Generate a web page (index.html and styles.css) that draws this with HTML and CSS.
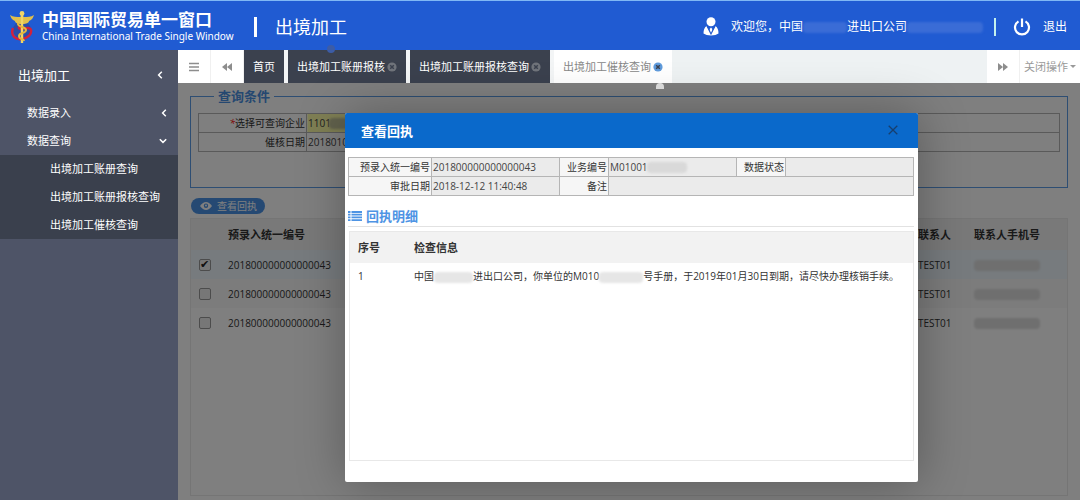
FILE: index.html
```html
<!DOCTYPE html>
<html lang="zh-CN">
<head>
<meta charset="utf-8">
<title>中国国际贸易单一窗口 - 出境加工</title>
<link rel="stylesheet" href="styles.css">
</head>
<body>
<svg class="defs" width="0" height="0" aria-hidden="true">
  <symbol id="i-left" viewBox="0 0 6 8"><path d="M4.8 .8 1.6 4l3.2 3.2" fill="none" stroke="currentColor" stroke-width="1.5"/></symbol>
  <symbol id="i-down" viewBox="0 0 8 6"><path d="M.8 1.2 4 4.4l3.2-3.2" fill="none" stroke="currentColor" stroke-width="1.5"/></symbol>
  <symbol id="i-bars" viewBox="0 0 10 10"><path d="M0 1.5h10M0 5h10M0 8.500h10" stroke="currentColor" stroke-width="1.4"/></symbol>
  <symbol id="i-back" viewBox="0 0 10 8"><path d="M5 0v8L0 4zM10 0v8L5 4z" fill="currentColor"/></symbol>
  <symbol id="i-fwd" viewBox="0 0 10 8"><path d="M0 0v8l5-4zM5 0v8l5-4z" fill="currentColor"/></symbol>
  <symbol id="i-times" viewBox="0 0 10 10"><circle cx="5" cy="5" r="4.600" fill="currentColor"/><path class="cross" d="m3.200 3.200 3.600 3.600M6.800 3.200 3.200 6.800" stroke-width="1.500"/></symbol>
</svg>

<header class="top">
  <div class="brand">
    <svg class="emblem" viewBox="0 0 24 34" aria-hidden="true">
      <circle cx="12" cy="20" r="9" fill="#2a4da8"/>
      <path d="M3 18c-3 8 3 12 9 11s10-5 9-9-7-1-10-1-3-3 1-3" fill="none" stroke="#d2213c" stroke-width="2.4"/>
      <path d="M0 5c3 2 7 2 10 2l2-1 2 1c3 0 7 0 10-2-1 3-2 5-5 6 0 2-3 3-6 3h-2c-3 0-6-1-6-3C2 10 1 8 0 5z" fill="#e3c04c"/>
      <circle cx="12" cy="3.5" r="2.4" fill="#f2d566"/>
      <path d="M12 5v28" stroke="#f2d566" stroke-width="2.4"/>
      <path d="M8 13c-1 5 8 3 8 7s-7 2-7 6 5 2 5 5" fill="none" stroke="#e7b83c" stroke-width="2"/>
    </svg>
    <div class="names">
      <div class="cn">中国国际贸易单一窗口</div>
      <div class="en">China International Trade Single Window</div>
    </div>
  </div>
  <span class="bar"></span>
  <h1>出境加工</h1>
  <div class="user">
    <svg width="16" height="19" viewBox="0 0 16 19" aria-hidden="true"><circle cx="8" cy="4.800" r="4.500" fill="#fff"/><path d="M3.500 9Q.5 11 .5 16.500 3 18.500 8 18.500t7.500-2Q15.500 11 12.500 9L8 16z" fill="#fff"/><path d="M8 10.500 9.300 12 8.800 16 8 17l-.8-1-.5-4z" fill="#fff"/><path d="M4 9l4 8 4-8" fill="none" stroke="#2058cf" stroke-width="1.200"/></svg>
    <span class="hello">欢迎您，中国<i class="smudge blue s44"></i>进出口公司<i class="smudge blue s76"></i></span>
    <span class="bar thin"></span>
    <button class="exit" type="button">
      <svg width="18" height="18" viewBox="0 0 18 18" aria-hidden="true"><path d="M5.500 3.400a7 7 0 1 0 7 0M9 .5v8.500" fill="none" stroke="#fff" stroke-width="2.200"/></svg>
      <span>退出</span>
    </button>
  </div>
</header>

<div class="shell">
  <nav class="side">
    <a class="lv1" href="#">出境加工<svg width="6" height="8"><use href="#i-left"/></svg></a>
    <a class="lv2" href="#">数据录入<svg width="6" height="8"><use href="#i-left"/></svg></a>
    <a class="lv2" href="#">数据查询<svg width="8" height="6"><use href="#i-down"/></svg></a>
    <div class="sub">
      <a href="#">出境加工账册查询</a>
      <a href="#">出境加工账册报核查询</a>
      <a href="#">出境加工催核查询</a>
    </div>
  </nav>

  <main class="main">
    <div class="tabs">
      <button class="tool" type="button" aria-label="菜单"><svg width="10" height="10"><use href="#i-bars"/></svg></button>
      <button class="tool" type="button" aria-label="向左"><svg width="10" height="8"><use href="#i-back"/></svg></button>
      <a class="tab" href="#">首页</a>
      <a class="tab dot" href="#">出境加工账册报核<svg width="10" height="10"><use href="#i-times"/></svg></a>
      <a class="tab" href="#">出境加工账册报核查询<svg width="10" height="10"><use href="#i-times"/></svg></a>
      <a class="tab active" href="#">出境加工催核查询<svg width="10" height="10"><use href="#i-times"/></svg></a>
      <span class="fill"></span>
      <button class="tool" type="button" aria-label="向右"><svg width="10" height="8"><use href="#i-fwd"/></svg></button>
      <button class="tool close-ops" type="button">关闭操作<span class="caret"></span></button>
    </div>

    <div class="content">
      <fieldset class="query">
        <legend>查询条件</legend>
        <table class="form">
          <tr><th><label for="ent"><em>*</em>选择可查询企业</label></th><td class="need"><input id="ent" value="1101"><i class="smudge dim over"></i></td></tr>
          <tr><th><label for="day">催核日期</label></th><td><input id="day" value="20180101"></td></tr>
        </table>
      </fieldset>
      <button class="view" type="button"><svg width="12" height="8" viewBox="0 0 12 8" aria-hidden="true"><path d="M0 4q6-8 12 0-6 8-12 0z" fill="#fff"/><circle cx="6" cy="3.800" r="2.200" fill="#4b93e6"/><circle cx="6" cy="3.500" r="1" fill="#fff"/></svg>查看回执</button>
      <div class="gridbox">
        <table class="grid">
          <colgroup><col class="c-check"><col><col class="c-man"><col class="c-tel"></colgroup>
          <thead><tr><th></th><th>预录入统一编号</th><th>联系人</th><th>联系人手机号</th></tr></thead>
          <tbody>
            <tr class="on"><td><input type="checkbox" aria-label="选择第1行" checked></td><td>201800000000000043</td><td>TEST01</td><td><i class="smudge dim s66"></i></td></tr>
            <tr class="odd"><td><input type="checkbox" aria-label="选择第2行"></td><td>201800000000000043</td><td>TEST01</td><td><i class="smudge dim s66"></i></td></tr>
            <tr><td><input type="checkbox" aria-label="选择第3行"></td><td>201800000000000043</td><td>TEST01</td><td><i class="smudge dim s66"></i></td></tr>
          </tbody>
        </table>
      </div>

      <div class="mask">
        <section class="dialog" role="dialog" aria-labelledby="dlg-title">
          <div class="dlg-head">
            <h2 id="dlg-title">查看回执</h2>
            <button type="button" aria-label="关闭"><svg width="10" height="10" viewBox="0 0 10 10"><path d="m.7.7 8.600 8.600M9.300.7.7 9.300" stroke="#173f6e" stroke-width="1.300"/></svg></button>
          </div>
          <div class="dlg-body">
            <table class="form info">
              <colgroup><col class="w1"><col class="w2"><col class="w3"><col class="w2"><col class="w3"><col></colgroup>
              <tr>
                <th><label for="f1">预录入统一编号</label></th><td><input id="f1" readonly value="201800000000000043"></td>
                <th><label for="f2">业务编号</label></th><td><input id="f2" readonly value="M01001"><i class="smudge over biz"></i></td>
                <th><label for="f3">数据状态</label></th><td><input id="f3" readonly></td>
              </tr>
              <tr>
                <th><label for="f4">审批日期</label></th><td><input id="f4" readonly value="2018-12-12 11:40:48"></td>
                <th><label for="f5">备注</label></th><td colspan="3"><input id="f5" readonly></td>
              </tr>
            </table>
            <h3><svg width="14" height="10" viewBox="0 0 14 10" aria-hidden="true"><path d="M0 1h2.500M3.500 1H14M0 3.700h2.500M3.500 3.700H14M0 6.400h2.500M3.500 6.400H14M0 9.100h2.500M3.500 9.100H14" stroke="#4e94e4" stroke-width="1.800"/></svg>回执明细</h3>
            <div class="detail">
              <table class="grid">
                <colgroup><col class="c-no"><col></colgroup>
                <thead><tr><th>序号</th><th>检查信息</th></tr></thead>
                <tbody><tr><td>1</td><td>中国<i class="smudge s39"></i>进出口公司，你单位的M010<i class="smudge s44"></i>号手册，于2019年01月30日到期，请尽快办理核销手续。</td></tr></tbody>
              </table>
            </div>
          </div>
        </section>
      </div>
    </div>
  </main>
</div>
</body>
</html>
```
FILE: styles.css
```css
* { box-sizing: border-box; }
html, body { height: 100%; }
body {
  margin: 0;
  display: flex;
  flex-direction: column;
  font: 10px/14px "Open Sans", "Noto Sans CJK SC", sans-serif;
  color: #333;
  background: #fff;
}
.defs { position: absolute; }
a { color: inherit; text-decoration: none; }
button { font: inherit; color: inherit; border: 0; padding: 0; background: none; cursor: pointer; }
table { border-collapse: collapse; table-layout: fixed; width: 100%; }
h1, h2, h3 { margin: 0; }
.cross { stroke: #3b414e; }

/* header */
.top {
  flex: none;
  height: 50px;
  display: flex;
  align-items: center;
  padding: 2px 13px 0 10px;
  background: #205bd2;
  border-top: 1px solid #80b8f5;
  color: #fff;
}
.brand { display: flex; align-items: center; gap: 8px; width: 244px; }
.emblem { width: 24px; height: 34px; }
.cn { font-size: 17px; line-height: 19px; font-weight: 700; }
.en { font-size: 10px; line-height: 14px; font-family: "Noto Sans", sans-serif; white-space: nowrap; }
.bar { width: 3px; height: 20px; background: #fff; }
.bar.thin { width: 2px; height: 18px; background: #c3f1ee; }
.top h1 { margin-left: 18px; font-size: 18px; line-height: 24px; font-weight: 400; }
.user { margin-left: auto; display: flex; align-items: center; font-size: 12px; }
.hello { margin: 0 11px 0 12px; white-space: nowrap; }
.exit { display: flex; align-items: center; gap: 12px; margin-left: 17px; }

/* blurred-out private values */
.smudge { display: inline-block; height: 11px; vertical-align: middle; background: #e6e6e6; border-radius: 4px; filter: blur(1px); }
.smudge.blue { background: #3a6cd6; }
.smudge.dim { background: #dedede; }
.s39 { width: 39px; }
.s44 { width: 44px; }
.s66 { width: 66px; }
.s76 { width: 76px; }
.smudge.over { position: absolute; left: 22px; top: 4px; width: 30px; }
.need .smudge { background: #c4c49a; }
.smudge.biz { left: 38px; width: 40px; background: #d9d9d9; }

.shell { flex: 1; display: flex; min-height: 0; }

/* sidebar */
.side { flex: none; width: 178px; background: #4e5467; color: #fff; font-size: 11px; }
.side a { display: flex; align-items: center; height: 28px; }
.side a svg { margin-left: auto; }
.side .lv1 { height: 49px; padding: 0 15px 0 18px; font-size: 13px; }
.side .lv2 { padding: 0 11px 0 27px; }
.sub { background: #3a404d; }
.sub a { padding-left: 50px; }

/* tab strip */
.main { flex: 1; min-width: 0; display: flex; flex-direction: column; }
.tabs { flex: none; height: 33px; display: flex; background: #eef2f3; font-size: 11px; }
.tool { width: 33px; display: flex; align-items: center; justify-content: center; background: #fff; color: #8d8d8d; border-right: 1px solid #f0f0f0; }
.tab { position: relative; display: flex; align-items: center; gap: 2px; padding: 0 9px; background: #3b414e; color: #fff; border-right: 4px solid #f3f5f6; white-space: nowrap; }
.tab svg { color: #70747b; }
.tab.active { background: #fff; color: #888; border-right: 0; }
.tab.active svg { color: #5f9bdc; }
.tab.active .cross { stroke: #fff; }
.tab.dot::before { content: ""; position: absolute; left: 39px; top: -5px; width: 8px; height: 8px; border-radius: 4px; background: #3c5ca6; }
.tab.active::after { content: ""; position: absolute; z-index: 3; right: 8px; top: 33px; width: 8px; height: 6px; border-radius: 4px 4px 0 0; background: #d8d8d8; }
.fill { flex: 1; }
.close-ops { width: 60px; border: 0; color: #999; gap: 2px; white-space: nowrap; }
.caret { border: 3px solid transparent; border-top-color: #999; border-bottom: 0; }

/* page under the dialog */
.content { position: relative; flex: 1; display: flex; flex-direction: column; padding: 5px 12px 4px; background: #fff; min-height: 0; }
.query { flex: none; margin: 0; padding: 9px 7px 0; height: 100px; border: 1px solid #5c9ce6; }
.query legend { margin-left: 16px; padding: 0 4px; font-size: 13px; line-height: 16px; font-weight: 700; color: #4b90e2; }
.form th, .form td { position: relative; height: 19px; padding: 0 1px; border: 1px solid #b5b5b5; }
.form th { width: 108px; text-align: right; font-weight: 400; white-space: nowrap; }
.form td.need { background: linear-gradient(90deg, #ffffa8 50px, #fff 50px); }
.form em { color: #f00; }
.form input { display: block; width: 100%; height: 17px; padding: 0; border: 0; outline: 0; background: none; font: inherit; color: #444; }
.view { flex: none; align-self: flex-start; display: flex; align-items: center; gap: 5px; height: 16px; margin: 10px 0 4px 1px; padding: 0 8px 0 9px; border-radius: 8px; background: #4b93e6; color: #fff; }
.gridbox { flex: 1; border: 1px solid #eaeaea; }
.grid th { height: 31px; padding: 0 8px; background: #f2f2f2; font-size: 11px; font-weight: 700; text-align: left; }
.grid td { height: 29px; padding: 0 8px; white-space: nowrap; }
.grid .on td { background: #eef7fd; }
.grid .odd td { background: #f9f9f9; }
.c-check { width: 29px; }
.c-man { width: 56px; }
.c-tel { width: 101px; }
.grid input { appearance: none; display: block; width: 12px; height: 12px; margin: 0; border: 1px solid #999; border-radius: 2px; background: #eee; }
.grid input:checked::before { content: "✔"; display: block; font: 11px/9px "DejaVu Sans", sans-serif; color: #222; }

/* dialog */
.mask { position: absolute; inset: 0; display: flex; padding: 30px 162px 18px 167px; background: rgba(0, 0, 0, .5); }
.dialog { flex: 1; min-width: 0; display: flex; flex-direction: column; background: #fff; border-radius: 2px; box-shadow: 1px 1px 50px rgba(0, 0, 0, .3); }
.dlg-head { flex: none; display: flex; align-items: center; justify-content: space-between; height: 35px; padding: 0 20px 0 16px; background: #0a69cb; color: #fff; border-radius: 2px 2px 0 0; }
.dlg-head h2 { font-size: 13px; line-height: 18px; }
.dlg-body { flex: 1; display: flex; flex-direction: column; padding: 9px 4px 21px 3px; }
.info { flex: none; }
.info th { background: #f6f6f6; }
.info td { background: #ebebeb; }
.info .w1 { width: 83px; }
.info .w2 { width: 128px; }
.info .w3 { width: 49px; }
.dlg-body h3 { display: flex; align-items: center; gap: 4px; margin: 11px 0 4px; padding-bottom: 1px; border-bottom: 1px solid #e2e2e2; font-size: 13px; line-height: 18px; color: #4e94e4; }
.detail { flex: 1; margin-left: 1px; border: 1px solid #e8e8e8; }
.detail td { height: 26px; }
.c-no { width: 56px; }
```
